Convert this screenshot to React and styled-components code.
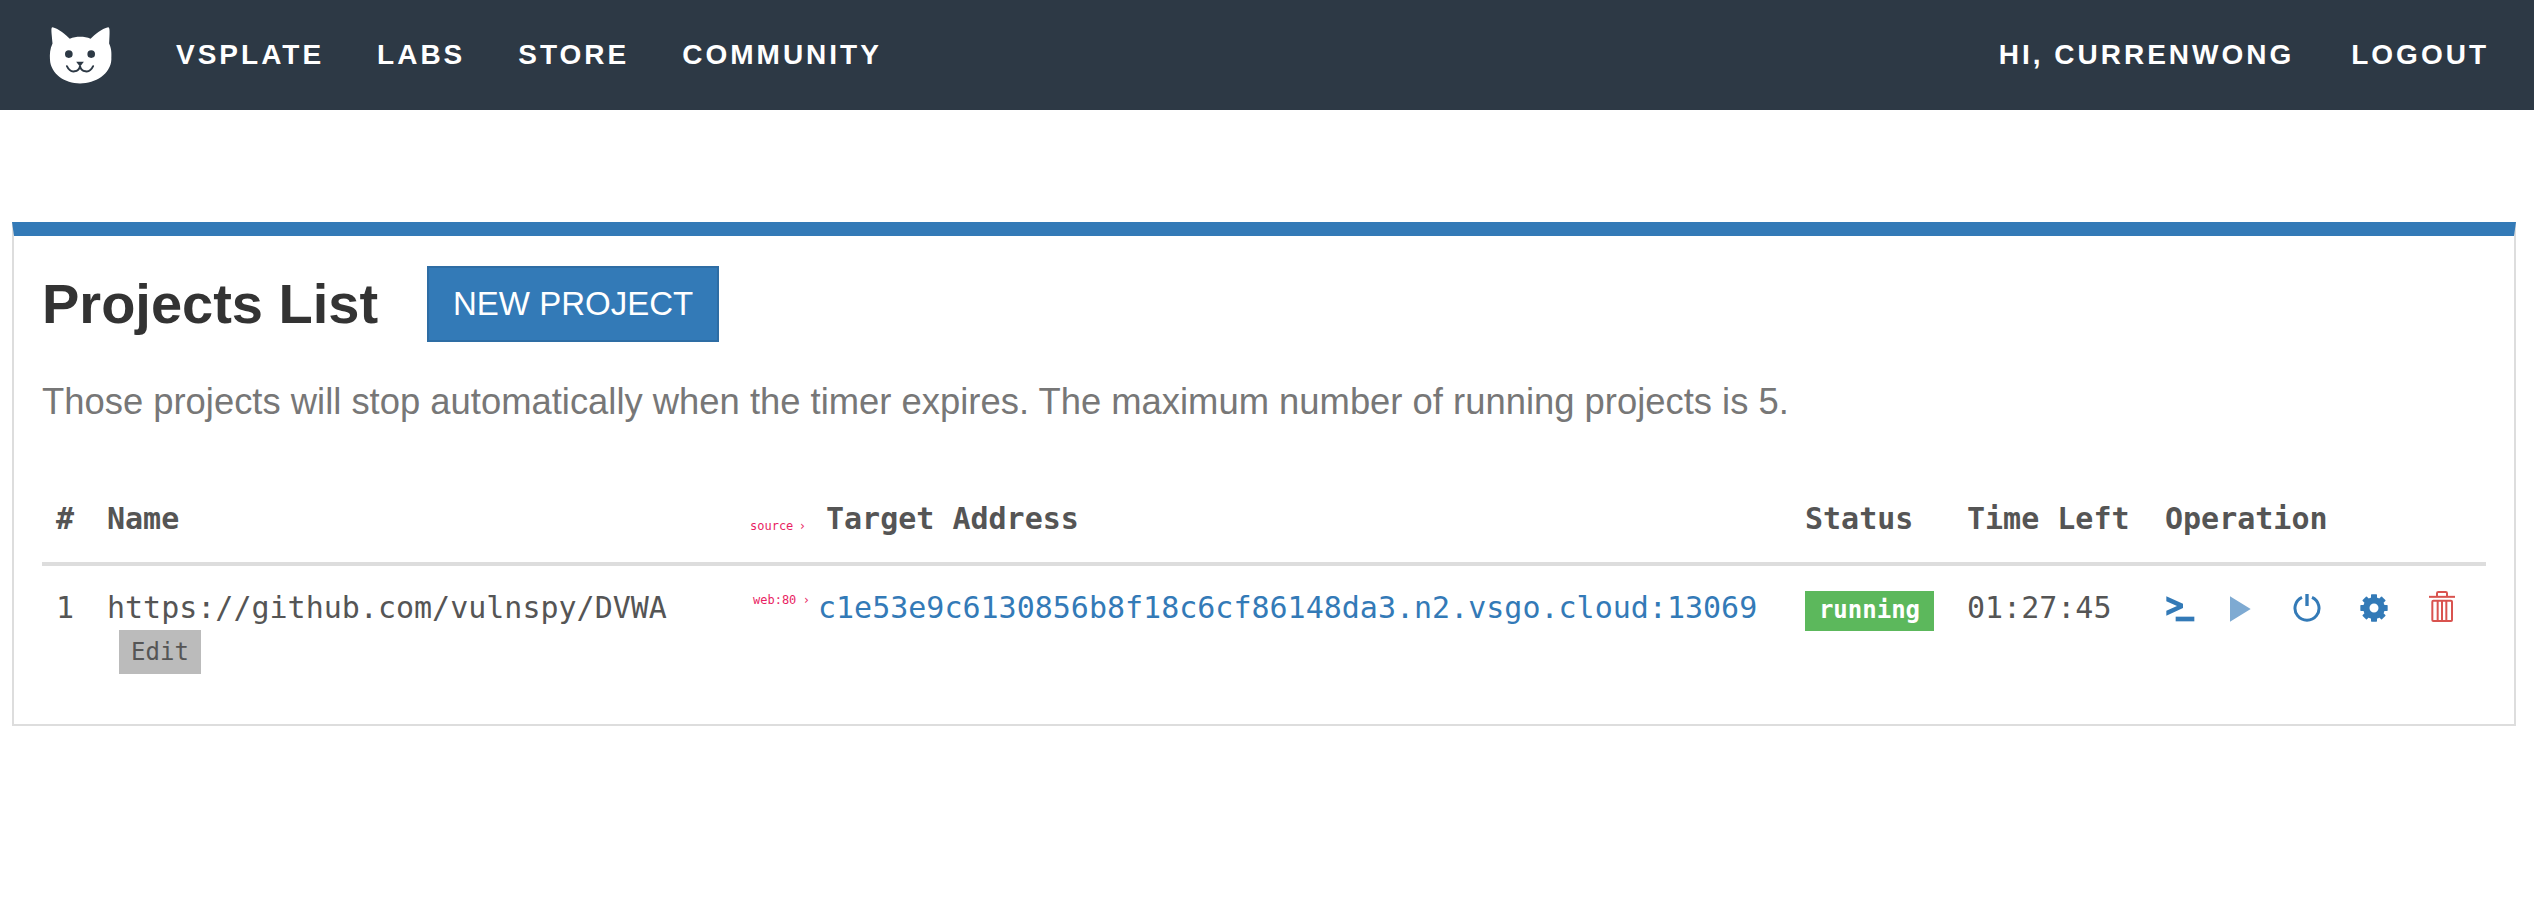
import React from "react"
import styled, { createGlobalStyle } from "styled-components"

const GlobalStyle = createGlobalStyle`
  body {
    margin: 0;
    background: #fff;
    font-family: "Liberation Sans", Arial, sans-serif;
  }
`

// Top navigation
const NavBar = styled.nav`
  height: 110px;
  display: flex;
  align-items: center;
  justify-content: space-between;
  padding: 0 45px 0 49px;
  background: #2d3945;
`

const NavGroup = styled.div`
  display: flex;
  align-items: center;
  gap: ${(p) => p.$gap}px;
`

const Logo = styled.svg`
  width: 63px;
  height: 60px;
  margin-right: 11px;
  flex: none;
`

const NavLink = styled.a`
  color: #fff;
  font-size: 28px;
  font-weight: 700;
  letter-spacing: 3px;
  line-height: 1;
  white-space: nowrap;
`

// The panel with the blue top edge
const Panel = styled.section`
  margin: 112px 18px 0 12px;
  padding: 30px 28px 36px;
  border: 2px solid #ddd;
  border-top: 14px solid #337ab7;
`

const TitleRow = styled.div`
  display: flex;
  align-items: center;
  gap: 49px;
`

const Title = styled.h1`
  margin: 0;
  color: #333;
  font-size: 56px;
  font-weight: 700;
  line-height: 76px;
`

const NewButton = styled.button`
  width: 292px;
  height: 76px;
  padding: 0;
  border: 2px solid #2e6da4;
  background: #337ab7;
  color: #fff;
  font-family: inherit;
  font-size: 33px;
`

const Intro = styled.p`
  margin: 40px 0 0;
  color: #777;
  font-size: 36.4px;
  line-height: 40px;
`

// Project table
const Table = styled.table`
  width: 100%;
  margin-top: 76px;
  border-collapse: collapse;
  table-layout: fixed;
  color: #555;
  font-family: "DejaVu Sans Mono", "Liberation Mono", monospace;
  font-size: 30px;
`

const Head = styled.th`
  padding: 0 0 22px 14px;
  border-bottom: 4px solid #ddd;
  text-align: left;
  font-weight: 700;
  line-height: 42px;
  white-space: nowrap;
`

const Cell = styled.td`
  padding: 21px 0 14px 14px;
  vertical-align: top;
  line-height: 42px;
  white-space: nowrap;
`

const Tag = styled.span`
  display: inline-flex;
  justify-content: space-between;
  width: ${(p) => p.$width}px;
  margin-left: ${(p) => p.$offset}px;
  margin-right: ${(p) => p.$after}px;
  color: #e91e63;
  font-size: 12px;
  font-weight: 400;
  line-height: 14px;
  vertical-align: ${(p) => p.$lift}px;
`

const Address = styled.a`
  color: #337ab7;
`

const EditButton = styled.button`
  display: block;
  width: 82px;
  height: 44px;
  margin: 1px 0 0 12px;
  padding: 0;
  border: 0;
  background: #bbb;
  color: #555;
  font-family: inherit;
  font-size: 24px;
`

const StatusBadge = styled.span`
  display: block;
  width: 129px;
  height: 40px;
  margin-top: 4px;
  background: #5cb85c;
  color: #fff;
  font-size: 24px;
  font-weight: 700;
  line-height: 38px;
  text-align: center;
`

const Operations = styled.div`
  display: flex;
  align-items: flex-end;
  height: 35px;
  margin-left: 1px;
`

const OpIcon = styled.svg`
  flex: none;
  margin-left: ${(p) => p.$space}px;
`

const CatLogo = () => (
  <Logo viewBox="55 40 197 182">
    <path
      fill="#fff"
      d="M66 44C85 48 108 68 120 80C140 72 165 72 185 80C197 68 220 48 240 44C246 44 245 60 243 95C252 115 250 130 250 145C248 190 200 220 152 220C105 220 60 190 58 145C57 128 58 112 66 95C63 60 60 44 66 44Z"
    />
    <circle cx="117" cy="128" r="12" fill="#2d3945" />
    <circle cx="187" cy="128" r="12" fill="#2d3945" />
    <path fill="#2d3945" d="M140 152H164L152 168Z" />
    <path
      fill="none"
      stroke="#2d3945"
      strokeWidth="6"
      strokeLinecap="round"
      d="M111 166Q120 185 135 182Q149 180 152 166Q155 180 169 182Q184 185 193 166"
    />
  </Logo>
)

const TerminalIcon = () => (
  <OpIcon $space={0} width="29" height="26" viewBox="47 77 87 78">
    <path fill="#337ab7" d="M48 78L98 100V113L48 136V121L80 107L48 93Z" />
    <rect x="76" y="139" width="56" height="14" fill="#337ab7" />
  </OpIcon>
)

const PlayIcon = () => (
  <OpIcon $space={35} width="21" height="26" viewBox="241 75 63 78">
    <path fill="#7eaad2" d="M241 76L303 114L241 152Z" />
  </OpIcon>
)

const PowerIcon = () => (
  <OpIcon $space={42} width="28" height="28" viewBox="429 69 84 84">
    <path
      fill="none"
      stroke="#337ab7"
      strokeWidth="9"
      d="M456 79A36 36 0 1 0 486 79"
    />
    <rect x="466" y="69" width="10" height="36" fill="#337ab7" />
  </OpIcon>
)

const GearIcon = () => (
  <OpIcon $space={39} width="28" height="28" viewBox="630 69 84 84">
    {[0, 45, 90, 135, 180, 225, 270, 315].map((angle) => (
      <rect
        key={angle}
        x="663"
        y="70"
        width="18"
        height="16"
        rx="2"
        fill="#337ab7"
        transform={`rotate(${angle} 672 111)`}
      />
    ))}
    <circle cx="672" cy="111" r="23" fill="none" stroke="#337ab7" strokeWidth="19" />
  </OpIcon>
)

const TrashIcon = () => (
  <OpIcon $space={41} width="26" height="31" viewBox="836 61 78 93">
    <g fill="none" stroke="#d9534f" strokeWidth="6">
      <path d="M836 78.5H914" />
      <path d="M860 77V68Q860 64 864 64H886Q890 64 890 68V77" />
      <rect x="846" y="90" width="59" height="61" rx="3" />
      <path d="M862 90V150M875 90V150M888 90V150" />
    </g>
  </OpIcon>
)

export default function App() {
  return (
    <>
      <GlobalStyle />
      <NavBar>
        <NavGroup $gap={53}>
          <CatLogo />
          <NavLink>VSPLATE</NavLink>
          <NavLink>LABS</NavLink>
          <NavLink>STORE</NavLink>
          <NavLink>COMMUNITY</NavLink>
        </NavGroup>
        <NavGroup $gap={57}>
          <NavLink>HI, CURRENWONG</NavLink>
          <NavLink>LOGOUT</NavLink>
        </NavGroup>
      </NavBar>
      <Panel>
        <TitleRow>
          <Title>Projects List</Title>
          <NewButton>NEW PROJECT</NewButton>
        </TitleRow>
        <Intro>
          Those projects will stop automatically when the timer expires. The maximum number of running projects is 5.
        </Intro>
        <Table>
          <colgroup>
            <col style={{ width: 51 }} />
            <col style={{ width: 643 }} />
            <col style={{ width: 1055 }} />
            <col style={{ width: 162 }} />
            <col style={{ width: 198 }} />
            <col />
          </colgroup>
          <thead>
            <tr>
              <Head>#</Head>
              <Head>Name</Head>
              <Head>
                <Tag $width={56} $offset={0} $after={20} $lift={-1}>
                  source <span>›</span>
                </Tag>
                Target Address
              </Head>
              <Head>Status</Head>
              <Head>Time Left</Head>
              <Head>Operation</Head>
            </tr>
          </thead>
          <tbody>
            <tr>
              <Cell>1</Cell>
              <Cell>
                https://github.com/vulnspy/DVWA
                <EditButton>Edit</EditButton>
              </Cell>
              <Cell>
                <Tag $width={57} $offset={3} $after={8} $lift={14}>
                  web:80 <span>›</span>
                </Tag>
                <Address>c1e53e9c6130856b8f18c6cf86148da3.n2.vsgo.cloud:13069</Address>
              </Cell>
              <Cell>
                <StatusBadge>running</StatusBadge>
              </Cell>
              <Cell>01:27:45</Cell>
              <Cell>
                <Operations>
                  <TerminalIcon />
                  <PlayIcon />
                  <PowerIcon />
                  <GearIcon />
                  <TrashIcon />
                </Operations>
              </Cell>
            </tr>
          </tbody>
        </Table>
      </Panel>
    </>
  )
}
